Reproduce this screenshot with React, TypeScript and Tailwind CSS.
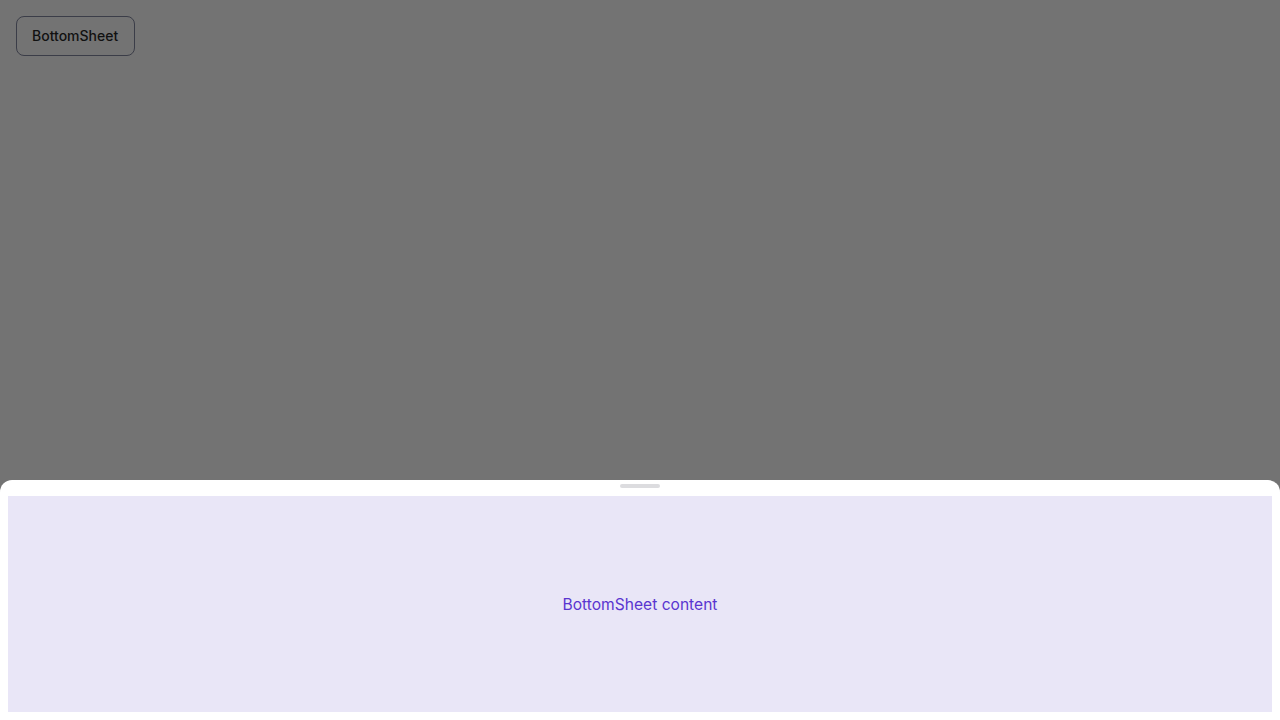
export default function App() {
  return (
    <div
      className="flex h-[720px] w-full flex-col bg-[#737373]"
      style={{ fontFamily: "Inter, 'Noto Sans', sans-serif" }}
    >
      <div className="flex-1 p-4">
        <button className="flex h-10 w-[119px] items-center rounded-lg border border-[#3b3d48] pl-[15px] text-sm font-medium text-[#111111]">
          BottomSheet
        </button>
      </div>
      <div className="flex h-[240px] flex-col rounded-t-xl bg-white px-2 pb-2 pt-1">
        <div className="mx-auto h-1 w-10 rounded-full bg-[#dcdcdf]" />
        <div className="mt-2 flex flex-1 items-center justify-center bg-[#e9e6f7] pt-0.5">
          <span className="text-[15.6px] text-[#5a35d0]">BottomSheet content</span>
        </div>
      </div>
    </div>
  )
}
